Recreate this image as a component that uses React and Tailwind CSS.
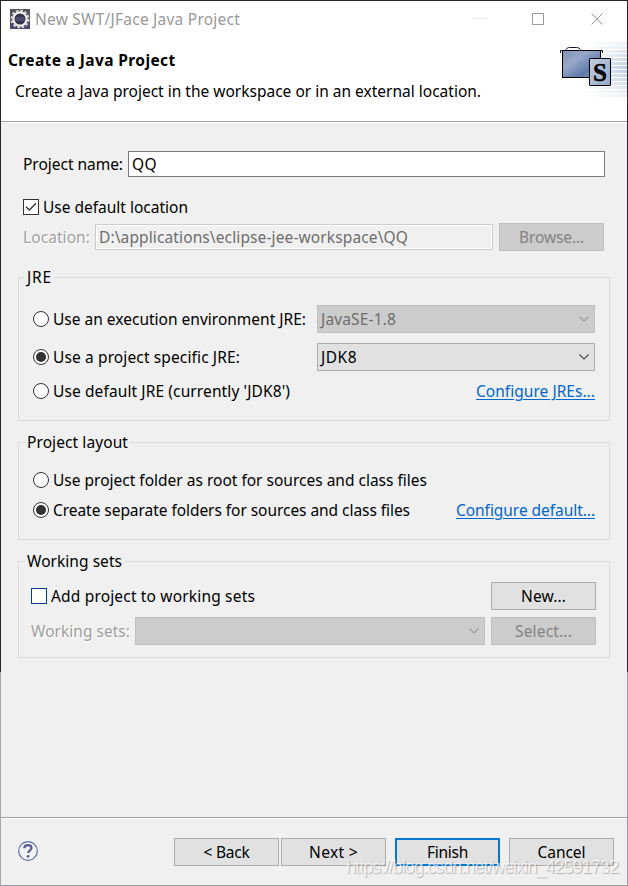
import React, { useLayoutEffect, useRef, useState } from "react";

// Text run whose tracking is adjusted so it occupies the given width.
function Text({ w, className = "", children }) {
  const ref = useRef(null);
  const [spacing, setSpacing] = useState(0);
  useLayoutEffect(() => {
    const natural = ref.current.getBoundingClientRect().width;
    setSpacing((w - natural) / children.length);
  }, []);
  return (
    <span ref={ref} className={`inline-block shrink-0 whitespace-pre ${className}`} style={{ letterSpacing: spacing }}>
      {children}
    </span>
  );
}

function Button({ w, children, variant = "normal" }) {
  const looks = {
    normal: "border border-[#adadad] bg-[#e1e1e1] text-black",
    disabled: "border border-[#bfbfbf] bg-[#cccccc] text-[#838383]",
    primary: "border-2 border-[#0078d7] bg-[#e1e1e1] text-black",
  };
  return (
    <button className={`flex h-7 w-[105px] shrink-0 items-center justify-center ${looks[variant]}`}>
      <Text w={w}>{children}</Text>
    </button>
  );
}

function Combo({ w, label, className = "", disabled }) {
  const look = disabled ? "border-[#bfbfbf] bg-[#cccccc] text-[#6d6d6d]" : "border-[#adadad] bg-[#e1e1e1] text-black";
  return (
    <div className={`flex h-7 shrink-0 items-center justify-between border pl-[3px] pr-[5px] ${look} ${className}`}>
      {label ? <Text w={w}>{label}</Text> : <span />}
      <svg width="10" height="6" viewBox="0 0 10 6" fill="none" stroke={disabled ? "#9c9c9c" : "#404040"} strokeWidth="1.1">
        <path d="M.5.5 5 5 9.5.5" />
      </svg>
    </div>
  );
}

function Radio({ w, label, checked }) {
  return (
    <label className="flex items-center gap-1">
      <span className="flex size-4 items-center justify-center rounded-full border border-[#333] bg-white">
        {checked && <span className="size-[10px] rounded-full bg-[#333]" />}
      </span>
      <Text w={w}>{label}</Text>
    </label>
  );
}

function Check({ w, label, checked, blue }) {
  return (
    <label className="flex items-center gap-1">
      <span className={`flex size-4 items-center justify-center border bg-white ${blue ? "border-[#003e92]" : "border-[#333]"}`}>
        {checked && (
          <svg width="12" height="10" viewBox="0 0 12 10" fill="none" stroke="#333" strokeWidth="1.3">
            <path d="M1 4.8 4.3 8 11 1.3" />
          </svg>
        )}
      </span>
      <Text w={w}>{label}</Text>
    </label>
  );
}

function Group({ title, w, className, children }) {
  return (
    <section className={`relative ml-[17px] w-[592px] border border-[#dcdcdc] ${className}`}>
      <div className="absolute -top-[13px] left-[6px] flex h-6 items-center bg-[#f0f0f0] pl-[2px] pr-[2px]">
        <Text w={w}>{title}</Text>
      </div>
      {children}
    </section>
  );
}

const etched = "text-[#a0a0a0] [text-shadow:1px_1px_0_#fff]";

function GearIcon() {
  return (
    <svg width="20" height="20" viewBox="0 0 20 20">
      <rect width="20" height="20" fill="#55505f" />
      <rect y="13" width="20" height="7" fill="#4c4672" />
      <circle cx="10" cy="10" r="8.4" fill="none" stroke="#d8d5d2" strokeWidth="2.2" strokeDasharray="2.6 1.8" />
      <circle cx="10" cy="10" r="6.6" fill="#35324a" stroke="#f0ece8" strokeWidth="2.2" />
      <path d="M5.500 9h9M5.300 11h9.400" stroke="#65628e" strokeWidth="1" />
    </svg>
  );
}

function Banner() {
  const stripes = [];
  for (let y = 1; y < 54; y += 4) stripes.push(y);
  return (
    <svg width="72" height="56" viewBox="0 0 72 56">
      <defs>
        <linearGradient id="fade" x1="0" x2="1">
          <stop offset="0" stopColor="#c9d6ea" stopOpacity="0" />
          <stop offset="1" stopColor="#bccbe3" />
        </linearGradient>
        <linearGradient id="folder" x1="0" y1="0" x2="1" y2="1">
          <stop offset="0" stopColor="#8090b8" />
          <stop offset=".35" stopColor="#98a8ca" />
          <stop offset=".7" stopColor="#5f79a8" />
          <stop offset="1" stopColor="#8aa0c4" />
        </linearGradient>
        <linearGradient id="sheet" x1="0" y1="0" x2="1" y2="1">
          <stop offset="0" stopColor="#c3cee1" />
          <stop offset="1" stopColor="#94a8c6" />
        </linearGradient>
      </defs>
      {stripes.map((y) => (
        <rect key={y} x={12 + Math.abs(y - 27) * 0.7} y={y} width={60 - Math.abs(y - 27) * 0.7} height="3" fill="url(#fade)" opacity={1 - Math.abs(y - 27) / 36} />
      ))}
      <path d="M10.500 9.500c1-2 2-3 4-3h7c2 0 3.500 1 4.500 3" fill="#fff" stroke="#15153a" />
      <path d="M5.500 12V9.500h42V12" fill="none" stroke="#15153a" />
      <rect x="7.500" y="9.500" width="38" height="27" fill="url(#folder)" stroke="#000" />
      <rect x="34.500" y="17.500" width="21" height="27" rx=".5" fill="url(#sheet)" stroke="#000" />
      <text x="45" y="39.500" textAnchor="middle" fontFamily="Liberation Serif, serif" fontWeight="bold" fontSize="25" stroke="#000" strokeWidth=".5">S</text>
    </svg>
  );
}

export default function App() {
  return (
    <div className="relative flex h-[886px] w-[628px] overflow-hidden bg-[#f0f0f0] font-['Noto_Sans','Open_Sans',sans-serif] text-[15.5px] leading-6 text-black">
      <div className="flex w-px shrink-0 flex-col">
        <div className="h-[672px] bg-[#29272b]" />
        <div className="flex-1 bg-[#a8a8aa]" />
      </div>
      <main className="flex w-[626px] shrink-0 flex-col border-t border-t-[#29272b] border-b border-b-[#9c9ca4]">
        <header className="h-[121px] shrink-0 border-b border-[#a0a0a0] bg-white">
          <div className="flex h-9 items-center">
            <div className="ml-[9px] flex"><GearIcon /></div>
            <Text w={205} className="ml-[5px] text-[#999]">New SWT/JFace Java Project</Text>
            <svg className="ml-auto mr-[23px]" width="130" height="12" viewBox="0 0 130 12" fill="none">
              <path d="M0 5.5h12" stroke="#eeeee6" />
              <path d="M58.500 .5h11v11h-11z" stroke="#999" />
              <path d="m117.500.5 11 11m0-11-11 11" stroke="#999" />
            </svg>
          </div>
          <div className="flex justify-between">
            <div className="pt-[11px]">
              <div className="ml-[7px]"><Text w={167.5} className="font-bold">Create a Java Project</Text></div>
              <div className="ml-[14px] mt-[7px]"><Text w={466}>Create a Java project in the workspace or in an external location.</Text></div>
            </div>
            <div className="pt-1"><Banner /></div>
          </div>
        </header>
        <div className="h-px shrink-0 bg-white" />

        <div className="flex h-[694px] shrink-0 flex-col">
          <div className="ml-[22px] mt-7 flex items-center">
            <Text w={100} className="mr-[5px]">Project name:</Text>
            <div className="flex h-[26px] w-[477px] items-center border border-[#7a7a7a] bg-white pl-[3px]"><Text w={25}>QQ</Text></div>
          </div>
          <div className="ml-[22px] mt-[18px]"><Check w={145} label="Use default location" checked /></div>
          <div className="ml-[22px] mt-[4px] flex items-center">
            <Text w={67} className={`mr-[5px] ${etched}`}>Location:</Text>
            <div className="flex h-[26px] w-[398px] items-center border border-[#ccc] pl-[3px] text-[#6d6d6d] shadow-[inset_0_0_0_1px_#fff]">
              <Text w={309}>D:\applications\eclipse-jee-workspace\QQ</Text>
            </div>
            <div className="ml-[6px]"><Button w={65} variant="disabled">Browse...</Button></div>
          </div>

          <Group title="JRE" w={25} className="mt-[26px] h-36 shrink-0 pl-[14px] pr-[14px] pt-[27px]">
            <div className="flex h-7 items-center justify-between">
              <Radio w={253} label="Use an execution environment JRE:" />
              <Combo w={75} label="JavaSE-1.8" className="w-[278px]" disabled />
            </div>
            <div className="mt-[10px] flex h-7 items-center justify-between">
              <Radio w={187} label="Use a project specific JRE:" checked />
              <Combo w={36} label="JDK8" className="w-[278px]" />
            </div>
            <div className="mt-[8px] flex items-center justify-between">
              <Radio w={237} label="Use default JRE (currently 'JDK8')" />
              <Text w={119} className="text-[#0066cc] underline underline-offset-2">Configure JREs...</Text>
            </div>
          </Group>

          <Group title="Project layout" w={101} className="mt-[21px] h-[98px] shrink-0 pl-[14px] pr-[14px] pt-[25px]">
            <Radio w={374} label="Use project folder as root for sources and class files" />
            <div className="mt-[6px] flex items-center justify-between">
              <Radio w={357} label="Create separate folders for sources and class files" checked />
              <Text w={139} className="text-[#0066cc] underline underline-offset-2">Configure default...</Text>
            </div>
          </Group>

          <Group title="Working sets" w={95} className="mt-[21px] h-[97px] shrink-0 pl-[12px] pr-[13px] pt-5">
            <div className="flex items-center justify-between">
              <Check w={204} label="Add project to working sets" blue />
              <Button w={45}>New...</Button>
            </div>
            <div className="mt-[7px] flex items-center">
              <Text w={99} className={`mr-[5px] ${etched}`}>Working sets:</Text>
              <Combo className="mr-[6px] w-[350px]" disabled />
              <Button w={57} variant="disabled">Select...</Button>
            </div>
          </Group>
        </div>

        <div className="h-px shrink-0 bg-[#a0a0a0]" />
        <div className="h-px shrink-0 bg-white" />
        <footer className="flex items-start pl-[17px] pt-[19px]">
          <svg className="mt-[3px]" width="20" height="20" viewBox="0 0 20 20">
            <circle cx="10" cy="10" r="9.300" fill="#f2f3f3" stroke="#5d719b" strokeWidth="1.200" />
            <path d="M6.300 7.300C6.300 5 7.800 4.200 10 4.200s3.500 1 3.500 2.800c0 2.300-3.200 2.300-3.200 5" fill="none" stroke="#5a5c8e" strokeWidth="2.200" />
            <circle cx="10.100" cy="15.300" r="1.400" fill="#5a5c8e" />
          </svg>
          <div className="ml-[136px] flex gap-[2px]">
            <Button w={46}>{"< Back"}</Button>
            <Button w={49}>{"Next >"}</Button>
          </div>
          <div className="ml-[9px] flex gap-[9px]">
            <Button w={41} variant="primary">Finish</Button>
            <Button w={48}>Cancel</Button>
          </div>
        </footer>
      </main>
      <div className="flex w-px shrink-0 flex-col">
        <div className="h-[672px] bg-[#29272b]" />
        <div className="flex-1 bg-[#9c9ca4]" />
      </div>
      <div className="absolute left-[346px] top-[855px] font-['Liberation_Sans',sans-serif] text-[18px] text-white/70 [text-shadow:1px_1px_1px_rgba(0,0,0,0.25)]">
        <Text w={272}>https://blog.csdn.net/weixin_42591732</Text>
      </div>
    </div>
  );
}
